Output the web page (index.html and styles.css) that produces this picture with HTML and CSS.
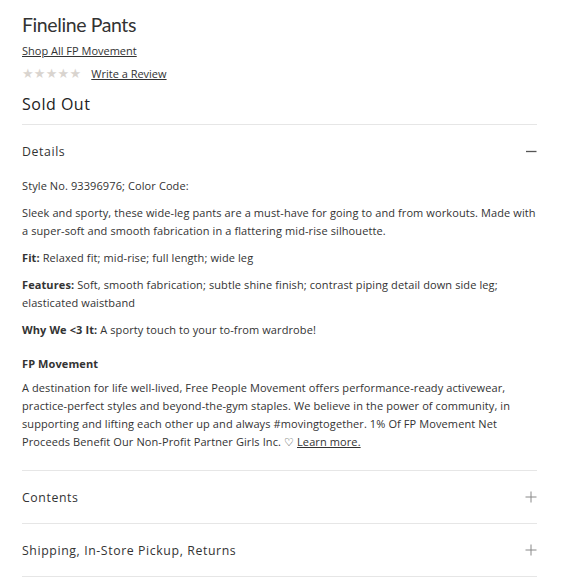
FILE: index.html
```html
<!DOCTYPE html>
<html>
<head>
<meta charset="utf-8">
<link rel="stylesheet" href="styles.css">
</head>
<body>
<div class="product">
  <h1 class="title">Fineline Pants</h1>
  <a class="brand-link" href="#">Shop All FP Movement</a>
  <div class="rating">
    <span class="stars">★★★★★</span>
    <a class="review-link" href="#">Write a Review</a>
  </div>
  <div class="status">Sold Out</div>

  <section class="accordion open">
    <div class="acc-head">
      <span class="acc-title">Details</span>
      <svg class="acc-icon" width="12" height="12" viewBox="0 0 12 12"><path d="M1 6.5H11.5" stroke="#555" stroke-width="1.3"/></svg>
    </div>
    <div class="acc-body">
      <p>Style No. 93396976; Color Code:</p>
      <p>Sleek and sporty, these wide-leg pants are a must-have for going to and from workouts. Made with a super-soft and smooth fabrication in a flattering mid-rise silhouette.</p>
      <p><b>Fit:</b> Relaxed fit; mid-rise; full length; wide leg</p>
      <p><b>Features:</b> Soft, smooth fabrication; subtle shine finish; contrast piping detail down side leg; elasticated waistband</p>
      <p><b>Why We &lt;3 It:</b> A sporty touch to your to-from wardrobe!</p>
      <h3 class="sub">FP Movement</h3>
      <p>A destination for life well-lived, Free People Movement offers performance-ready activewear, practice-perfect styles and beyond-the-gym staples. We believe in the power of community, in supporting and lifting each other up and always #movingtogether. 1% Of FP Movement Net Proceeds Benefit Our Non-Profit Partner Girls Inc. ♡ <a href="#">Learn more.</a></p>
    </div>
  </section>

  <section class="accordion">
    <div class="acc-head">
      <span class="acc-title">Contents</span>
      <svg class="acc-icon" width="12" height="12" viewBox="0 0 12 12"><path d="M0.5 6H11.5M6 0.5V11.5" stroke="#888" stroke-width="1"/></svg>
    </div>
  </section>
  <section class="accordion">
    <div class="acc-head">
      <span class="acc-title">Shipping, In-Store Pickup, Returns</span>
      <svg class="acc-icon" width="12" height="12" viewBox="0 0 12 12"><path d="M0.5 6H11.5M6 0.5V11.5" stroke="#888" stroke-width="1"/></svg>
    </div>
  </section>
</div>
</body>
</html>
```
FILE: styles.css
```css
* { box-sizing: border-box; }
body {
  margin: 0;
  background: #fff;
  color: #333;
  font-family: "Open Sans", "Liberation Sans", sans-serif;
}
.product {
  width: 515px;
  margin-left: 22px;
  padding-top: 12px;
  display: flex;
  flex-direction: column;
  align-items: flex-start;
}
.title {
  margin: 0;
  font-family: Lato, "Liberation Sans", sans-serif;
  font-weight: 400;
  font-size: 19.5px;
  line-height: 26px;
  color: #333;
  letter-spacing: -0.4px;
}
.brand-link {
  margin-top: 5px;
  font-size: 11px;
  line-height: 16px;
  color: #333;
  text-decoration: underline;
}
.rating {
  margin-top: 7px;
  display: flex;
  align-items: center;
  gap: 10px;
}
.stars {
  color: #d9d4cf;
  font-family: "DejaVu Sans", sans-serif;
  font-size: 13px;
  letter-spacing: 0.2px;
  line-height: 16px;
}
.review-link {
  font-size: 11px;
  line-height: 16px;
  color: #333;
}
.status {
  margin-top: 11px;
  font-size: 16px;
  line-height: 22px;
  letter-spacing: 0.5px;
  color: #222;
}
.accordion {
  width: 100%;
  border-top: 1px solid #e6e6e6;
}
.accordion:last-child { border-bottom: 1px solid #e6e6e6; }
.product .accordion:first-of-type { margin-top: 9px; }
.acc-head {
  height: 52px;
  display: flex;
  align-items: center;
  justify-content: space-between;
}
.acc-title {
  font-size: 12.3px;
  letter-spacing: 0.6px;
  color: #333;
}
.acc-icon { display: block; }
.acc-body {
  padding: 0 0 10px;
  font-size: 11px;
  line-height: 18px;
  letter-spacing: 0.1px;
  color: #333;
}
.acc-body p { margin: 0 0 9px; }
.acc-body b { font-weight: 700; }
.acc-body .sub {
  margin: 16px 0 6px;
  font-size: 11px;
  font-weight: 700;
  line-height: 18px;
}
.acc-body a { color: #333; }
```
